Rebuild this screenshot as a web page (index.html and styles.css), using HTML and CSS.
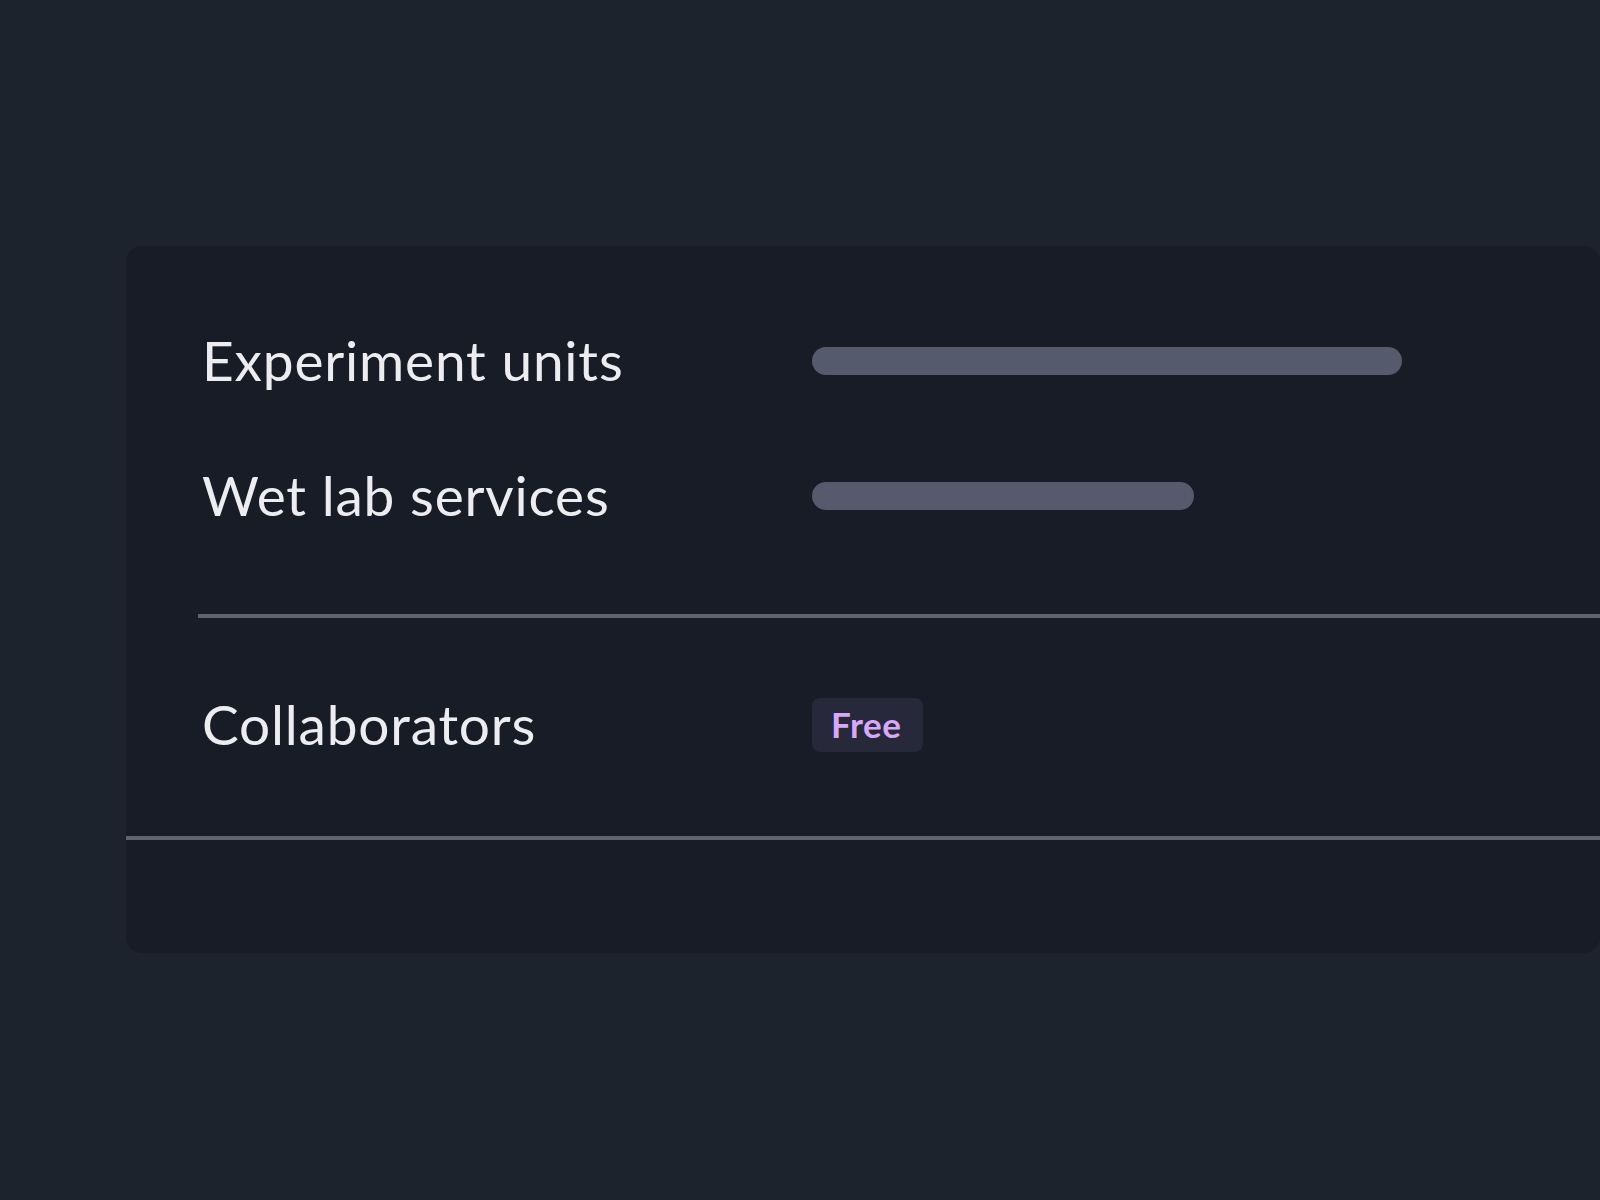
FILE: index.html
```html
<!DOCTYPE html>
<html lang="en">
<head>
<meta charset="utf-8">
<title>Usage</title>
<link rel="stylesheet" href="styles.css">
</head>
<body>
  <section class="card">
    <div class="group group-usage">
      <div class="row">
        <span class="label">Experiment units</span>
        <span class="bar bar-long"></span>
      </div>
      <div class="row">
        <span class="label">Wet lab services</span>
        <span class="bar bar-short"></span>
      </div>
    </div>
    <div class="group group-collab">
      <div class="row">
        <span class="label">Collaborators</span>
        <span class="badge">Free</span>
      </div>
    </div>
    <div class="card-foot"></div>
  </section>
</body>
</html>
```

FILE: styles.css
```css
html, body {
  margin: 0;
  padding: 0;
}

body {
  background: #1d232d;
  font-family: Lato, "Noto Sans", sans-serif;
  color: #ededf1;
  width: 1600px;
  height: 1200px;
  overflow: hidden;
}

.card {
  margin-left: 126px;
  margin-top: 246px;
  width: 1474px;
  height: 707px;
  box-sizing: border-box;
  background: #171c26;
  border-radius: 16px;
  padding-top: 47px;
  overflow: hidden;
}

.group-usage {
  margin-left: 72px;
  padding-bottom: 51px;
  border-bottom: 4px solid #60636e;
}

.group-collab {
  padding-left: 72px;
  padding-top: 39px;
  padding-bottom: 44px;
  border-bottom: 4px solid #60636e;
}

.row {
  display: flex;
  align-items: center;
  height: 135px;
}

.label {
  width: 614px;
  padding-left: 4px;
  box-sizing: border-box;
  font-size: 55px;
  line-height: 1;
  letter-spacing: 0.8px;
  flex: none;
}

.bar {
  display: block;
  height: 28px;
  border-radius: 14px;
  background: #555b6d;
}

.bar-long {
  width: 590px;
}

.bar-short {
  width: 382px;
}

.badge {
  display: inline-flex;
  align-items: center;
  height: 54px;
  padding: 0 22px 0 19px;
  border-radius: 8px;
  background: #27283a;
  color: #d7a7fa;
  font-weight: 700;
  font-size: 35px;
  line-height: 1;
  letter-spacing: 0.5px;
}

.card-foot {
  height: 113px;
}
```
